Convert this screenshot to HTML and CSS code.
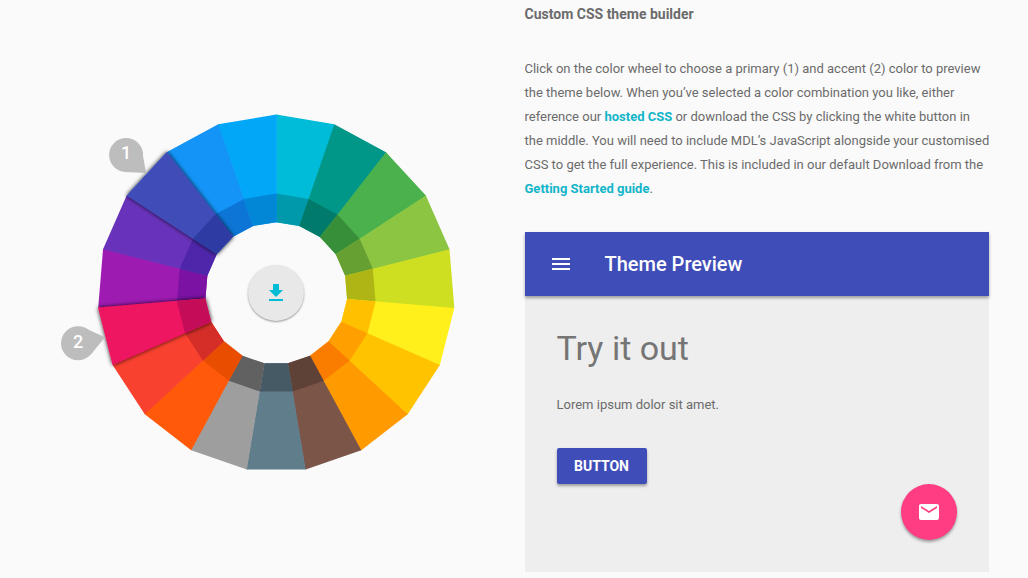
FILE: index.html
```
<!DOCTYPE html>
<html lang="en">
<head>
    <meta charset="UTF-8">
    <meta name="viewport" content="width=device-width, initial-scale=1.0">
    <title>Custom CSS theme builder</title>
    <link rel="stylesheet" href="styles.css">
</head>
<body>
    <main class="customizer">
        <div class="wheel">
            <svg class="wheel-svg" viewBox="-232 -200 464 400" role="img" aria-label="Color wheel">
                <defs>
                    <!-- one of 19 slices, the inner part is drawn darker -->
                    <polygon id="slice" points="0,-178.5 57.96,-168.83 58.46,-168.66 23.55,-66.98 23.05,-67.15 0,-71" />
                    <polygon id="inner" points="0,-99.5 32.31,-94.11 32.81,-93.94 23.55,-66.98 23.05,-67.15 0,-71" />
                    <filter id="shadow" x="-20%" y="-20%" width="140%" height="140%">
                        <feDropShadow dx="0" dy="0" stdDeviation="2" flood-color="#000" flood-opacity="0.9" />
                    </filter>
                </defs>
                <g><use href="#slice" fill="#00bcd9"/><use href="#inner" fill="#0099ab"/></g>
                <g transform="rotate(18.947)"><use href="#slice" fill="#009788"/><use href="#inner" fill="#007a6b"/></g>
                <g transform="rotate(37.895)"><use href="#slice" fill="#4ab14c"/><use href="#inner" fill="#388f3a"/></g>
                <g transform="rotate(56.842)"><use href="#slice" fill="#8bc542"/><use href="#inner" fill="#67a032"/></g>
                <g transform="rotate(75.789)"><use href="#slice" fill="#cddf20"/><use href="#inner" fill="#afb515"/></g>
                <g transform="rotate(94.737)"><use href="#slice" fill="#ffef1b"/><use href="#inner" fill="#ffc000"/></g>
                <g transform="rotate(113.684)"><use href="#slice" fill="#ffc300"/><use href="#inner" fill="#ffa000"/></g>
                <g transform="rotate(132.632)"><use href="#slice" fill="#ff9a00"/><use href="#inner" fill="#fb7d00"/></g>
                <g transform="rotate(151.579)"><use href="#slice" fill="#7b5548"/><use href="#inner" fill="#5e4137"/></g>
                <g transform="rotate(170.526)"><use href="#slice" fill="#607d8c"/><use href="#inner" fill="#455a65"/></g>
                <g transform="rotate(189.474)"><use href="#slice" fill="#9e9e9e"/><use href="#inner" fill="#616161"/></g>
                <g transform="rotate(208.421)"><use href="#slice" fill="#ff5909"/><use href="#inner" fill="#e94d00"/></g>
                <g transform="rotate(227.368)"><use href="#slice" fill="#f9412f"/><use href="#inner" fill="#d52e28"/></g>
                <g transform="rotate(265.263)"><use href="#slice" fill="#9e1bb2"/><use href="#inner" fill="#7b12a3"/></g>
                <g transform="rotate(284.211)"><use href="#slice" fill="#6833ba"/><use href="#inner" fill="#4f26aa"/></g>
                <g transform="rotate(322.105)"><use href="#slice" fill="#1494f7"/><use href="#inner" fill="#0d75d6"/></g>
                <g transform="rotate(341.053)"><use href="#slice" fill="#03a7f8"/><use href="#inner" fill="#0286d6"/></g>

                <!-- selected colors -->
                <g filter="url(#shadow)"><g transform="rotate(303.158)"><use href="#slice" fill="#3f4eb9"/><use href="#inner" fill="#2f3ba2"/></g></g>
                <g filter="url(#shadow)"><g transform="rotate(246.316)"><use href="#slice" fill="#ee1261"/><use href="#inner" fill="#c40f59"/></g></g>

                <g class="marker">
                    <circle cx="-150" cy="-138" r="17" />
                    <path d="M-130,-120 L-152,-121 L-134,-142 Z" />
                    <text x="-150" y="-134">1</text>
                </g>
                <g class="marker">
                    <circle cx="-198" cy="50" r="17" />
                    <path d="M-171,44 L-193,34 L-185,61 Z" />
                    <text x="-198" y="55">2</text>
                </g>
            </svg>
            <button class="download" type="button" aria-label="Download CSS">
                <svg class="icon" viewBox="0 0 24 24"><path d="M19 9h-4V3H9v6H5l7 7 7-7zM5 18v2h14v-2H5z"/></svg>
            </button>
        </div>

        <div class="info">
            <h4 class="title">Custom CSS theme builder</h4>
            <p class="text intro">Click on the color wheel to choose a primary (1) and accent (2) color to preview the theme below. When you’ve selected a color combination you like, either reference our <a href="#">hosted CSS</a> or download the CSS by clicking the white button in the&nbsp;middle. You will need to include MDL’s JavaScript alongside your customised CSS to get the full experience. This is included in our default Download from the <a href="#">Getting Started guide</a>.</p>

            <section class="preview">
                <header class="preview-header">
                    <button class="menu" type="button" aria-label="Menu">
                        <svg class="icon" viewBox="0 0 24 24"><path d="M3 18h18v-2H3v2zm0-5h18v-2H3v2zm0-7v2h18V6H3z"/></svg>
                    </button>
                    <span class="preview-title">Theme Preview</span>
                </header>
                <div class="preview-content">
                    <h3 class="heading">Try it out</h3>
                    <p class="text">Lorem ipsum dolor sit amet.</p>
                    <button class="button" type="button">BUTTON</button>
                </div>
                <button class="fab" type="button" aria-label="Mail">
                    <svg class="icon" viewBox="0 0 24 24"><path d="M20 4H4c-1.100 0-1.990.9-1.990 2L2 18c0 1.100.9 2 2 2h16c1.100 0 2-.9 2-2V6c0-1.100-.9-2-2-2zm0 4l-8 5-8-5V6l8 5 8-5v2z"/></svg>
                </button>
            </section>
        </div>
    </main>
</body>
</html>
```
FILE: styles.css
```
* {
    box-sizing: border-box;
}

body {
    margin: 0;
    background: #fafafa;
    color: #6b6b6b;
    font-family: Roboto, "Liberation Sans", sans-serif;
}

h3, h4, p {
    margin: 0;
}

button {
    border: none;
    padding: 0;
    font-family: inherit;
    cursor: pointer;
}

.icon {
    display: block;
    width: 24px;
    height: 24px;
    fill: currentColor;
}

.customizer {
    display: grid;
    grid-template-columns: 1fr 1fr;
    gap: 16px;
    align-items: start;
    padding: 2px 39px 6px 44px;
}

/* color wheel */
.wheel {
    position: relative;
    margin-top: 91px;
}

.wheel-svg {
    display: block;
    width: 100%;
}

.marker circle,
.marker path {
    fill: #bdbdbd;
}

.marker text {
    fill: #fff;
    font-size: 18px;
    font-weight: 500;
    text-anchor: middle;
}

.download {
    position: absolute;
    top: 50%;
    left: 50%;
    transform: translate(-50%, -50%);
    display: flex;
    align-items: center;
    justify-content: center;
    width: 56px;
    height: 56px;
    border-radius: 50%;
    background: #e8e8e8;
    color: #00bcd4;
    box-shadow: 0 1px 2px rgba(0, 0, 0, 0.4);
}

/* right column */
.title {
    margin-bottom: 31px;
    font-size: 14px;
    font-weight: 700;
    line-height: 24px;
}

.text {
    font-size: 13px;
    line-height: 24px;
}

.intro {
    margin-right: -3px;
}

.text a {
    color: #11b5c9;
    font-weight: 700;
    text-decoration: none;
}

.preview {
    position: relative;
    margin-top: 31px;
    background: #eee;
}

.preview-header {
    display: flex;
    align-items: center;
    gap: 32px;
    height: 64px;
    padding: 0 24px;
    background: #3f4db8;
    color: #fff;
    box-shadow: 0 2px 3px rgba(0, 0, 0, 0.35);
}

.menu {
    background: none;
    color: inherit;
}

.preview-title {
    font-size: 20px;
    font-weight: 500;
}

.preview-content {
    padding: 32px 32px 88px;
}

.heading {
    margin-bottom: 25px;
    color: #757575;
    font-size: 34px;
    font-weight: 400;
    line-height: 40px;
}

.button {
    min-width: 90px;
    height: 36px;
    margin-top: 31px;
    padding: 0 16px;
    border-radius: 2px;
    background: #3f4db8;
    color: #fff;
    font-size: 14px;
    font-weight: 700;
    box-shadow: 0 2px 3px rgba(0, 0, 0, 0.35);
}

.fab {
    position: absolute;
    right: 32px;
    bottom: 32px;
    display: flex;
    align-items: center;
    justify-content: center;
    width: 56px;
    height: 56px;
    border-radius: 50%;
    background: #ff3d82;
    color: #fff;
    box-shadow: 0 2px 3px rgba(0, 0, 0, 0.35);
}
```
